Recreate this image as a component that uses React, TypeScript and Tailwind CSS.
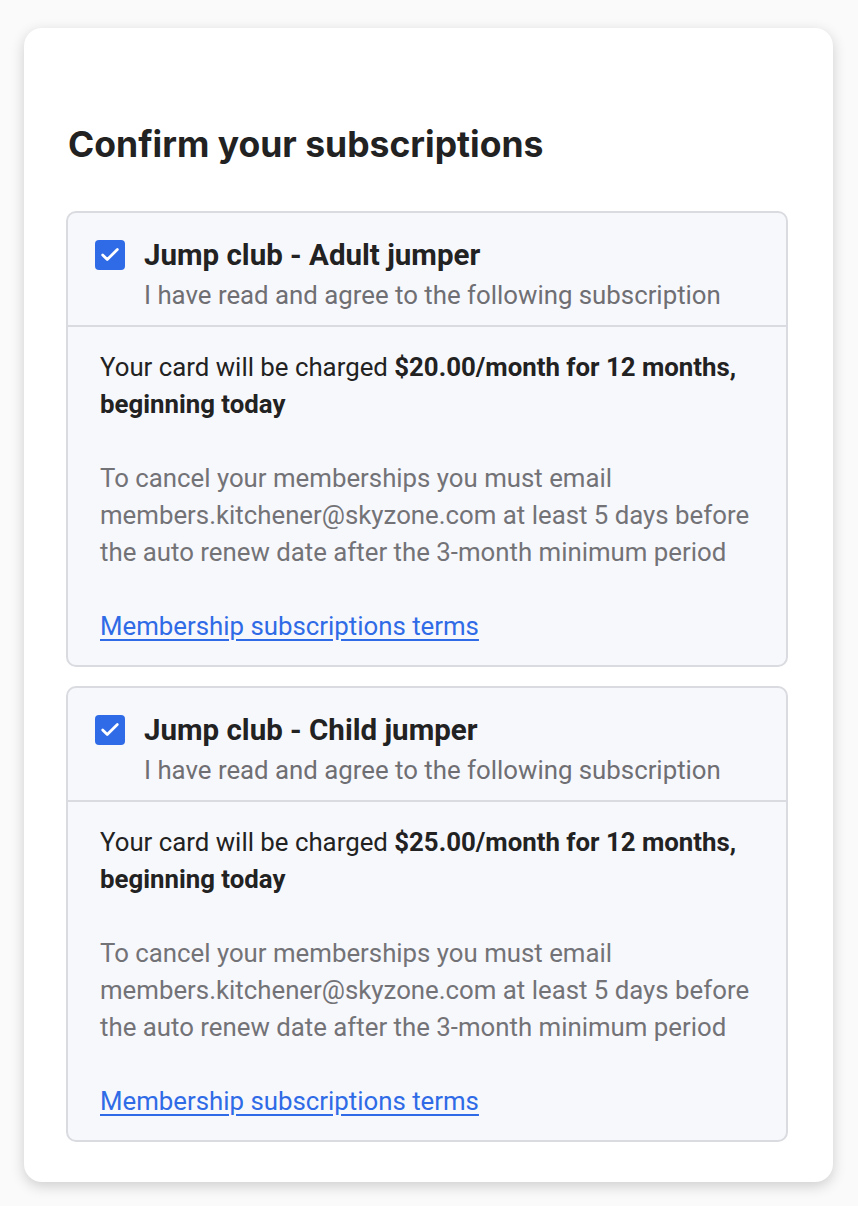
import { Check } from "lucide-react";

interface Subscription {
    name: string;
    price: string;
}

const SUBSCRIPTIONS: Subscription[] = [
    { name: "Jump club - Adult jumper", price: "$20.00" },
    { name: "Jump club - Child jumper", price: "$25.00" },
];

function SubscriptionBox({ sub }: { sub: Subscription }) {
    return (
        <div className="border-2 border-[#dadbe0] rounded-[10px] bg-[#f7f8fc]">
            <div className="flex gap-[19px] pl-[27px] pr-[20px] pt-[26px] pb-[14px] border-b-2 border-[#dadbe0]">
                <div className="mt-[1px] w-[30px] h-[30px] rounded-[4px] bg-[#2f6be6] flex items-center justify-center shrink-0">
                    <Check className="w-[22px] h-[22px] text-white" strokeWidth={3} />
                </div>
                <div>
                    <p className="text-[29.5px] leading-[32px] font-bold text-[#222]">{sub.name}</p>
                    <p className="text-[25.8px] leading-[32px] text-[#6f6f73] mt-[8px] whitespace-nowrap">I have read and agree to the following subscription</p>
                </div>
            </div>
            <div className="pl-[32px] pr-[26px] pt-[22px] pb-[20px] text-[25.8px] leading-[37px]">
                <p className="text-[#222]">
                    Your card will be charged <span className="font-bold">{sub.price}/month for 12 months, beginning today</span>
                </p>
                <p className="text-[#737377] mt-[37px]">
                    To cancel your memberships you must email members.kitchener@skyzone.com at least 5 days before the auto renew date after the 3-month minimum period
                </p>
                <a href="#" className="block mt-[37px] text-[#2f6be6] underline underline-offset-[4px]">
                    Membership subscriptions terms
                </a>
            </div>
        </div>
    );
}

export default function App() {
    return (
        <div className="min-h-screen bg-[#fafafa] pt-[28px] px-[24px] pb-[25px]" style={{ fontFamily: "Roboto, 'Liberation Sans', sans-serif" }}>
            <div className="w-[809px] bg-white rounded-[18px] shadow-[0_4px_14px_rgba(0,0,0,0.18)] pt-[97px] pl-[42px] pr-[45px] pb-[40px]">
                <h1 className="ml-[2px] text-[35.5px] leading-[40px] font-bold text-[#222] mb-[46px]" style={{ fontFamily: "Inter, 'Liberation Sans', sans-serif" }}>
                    Confirm your subscriptions
                </h1>
                <div className="flex flex-col gap-[19px]">
                    {SUBSCRIPTIONS.map((s) => (
                        <SubscriptionBox key={s.name} sub={s} />
                    ))}
                </div>
            </div>
        </div>
    );
}
